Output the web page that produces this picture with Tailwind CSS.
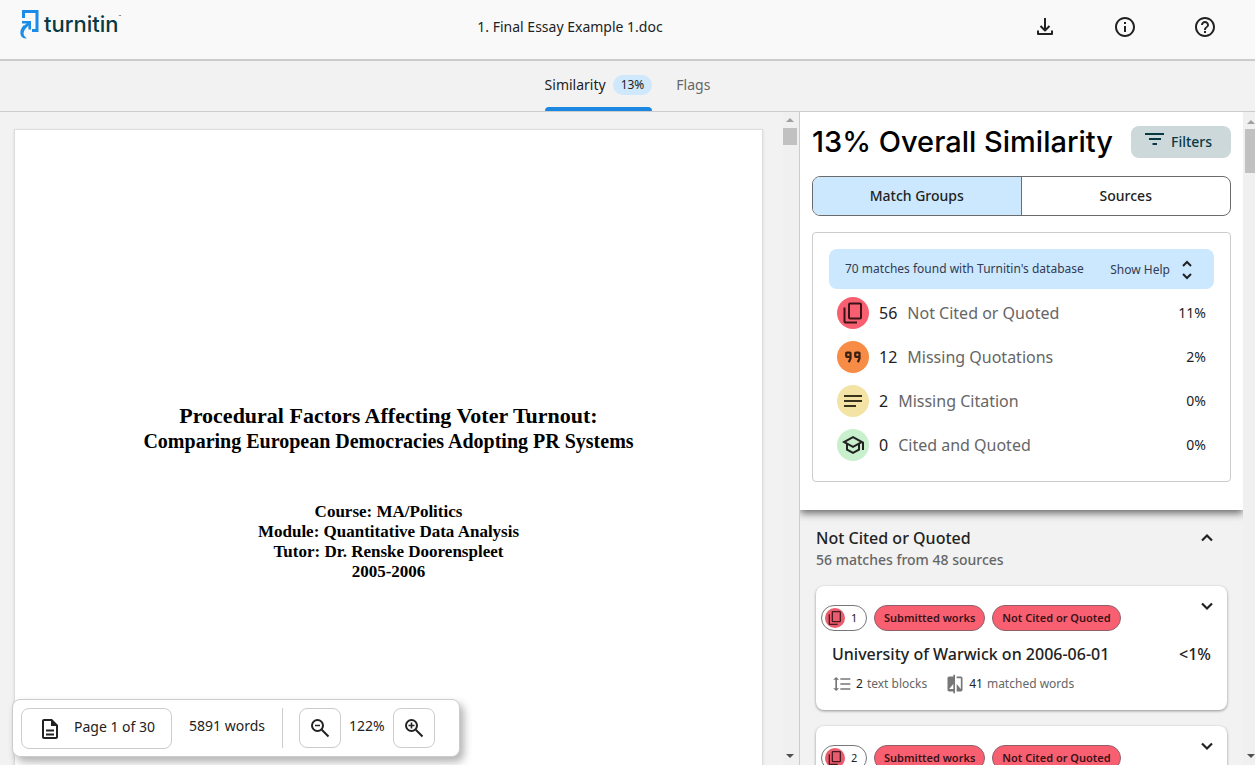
<!DOCTYPE html>
<html lang="en">
<head>
<meta charset="utf-8">
<title>1. Final Essay Example 1.doc</title>
<script src="https://cdn.jsdelivr.net/npm/@tailwindcss/browser@4"></script>
</head>
<body class="flex h-screen flex-col overflow-hidden bg-[#f2f2f2] font-['Noto_Sans',sans-serif] text-[#222]">
<svg class="hidden" aria-hidden="true">
  <symbol id="copy" viewBox="0 0 24 24"><path d="M9 2.500h10a1 1 0 0 1 1 1v13a1 1 0 0 1-1 1H9a1 1 0 0 1-1-1v-13a1 1 0 0 1 1-1zM3.500 6.500V20.500a1 1 0 0 0 1 1H16" fill="none" stroke="currentColor" stroke-width="2"/></symbol>
  <symbol id="down" viewBox="0 0 24 24"><path d="M7 9.500l5 5 5-5" fill="none" stroke="currentColor" stroke-width="2.200"/></symbol>
  <symbol id="spacing" viewBox="0 0 24 24"><path fill="currentColor" d="M6 7h2.500L5 3.500 1.500 7H4v10H1.500L5 20.500 8.500 17H6V7zm4-2v2h12V5H10zm0 14h12v-2H10v2zm0-6h12v-2H10v2z"/></symbol>
  <symbol id="compare" viewBox="0 0 24 24"><path fill="currentColor" d="M10 3H5c-1.100 0-2 .9-2 2v14c0 1.100.9 2 2 2h5v2h2V1h-2v2zm0 15H5l5-6v6zm9-15h-5v2h5v13l-5-6v9h5c1.100 0 2-.9 2-2V5c0-1.100-.9-2-2-2z"/></symbol>
  <symbol id="lens" viewBox="0 0 24 24"><path fill="none" stroke="currentColor" stroke-width="2" d="M14 14L20.500 20.500M9.500 4a5.500 5.500 0 1 0 0 11a5.500 5.500 0 1 0 0-11z"/></symbol>
</svg>

<header class="flex h-[61px] shrink-0 items-center border-b-2 border-[#ccc] bg-[#f9f9f9] pr-[10px]">
  <a href="#" class="flex w-[135px] items-start gap-1 pb-3 pl-5" aria-label="Turnitin">
    <svg class="h-8 w-5 shrink-0" viewBox="0 0 20 32" fill="none" stroke="#1b8ce8">
      <path stroke-width="3" d="M3.500 10V3.500H17V22.500H12"/>
      <path stroke-width="2.600" d="M2 14.300H9.700V21.500"/>
      <path stroke-width="3" d="M9 15L5 19"/>
      <path fill="#1b8ce8" stroke="none" d="M4 17L6.500 19.500C2.500 23.500 2.500 28 7 30.300C-1 31.500-1.500 22 4 17z"/>
    </svg>
    <span class="flex items-start font-[Inter,sans-serif] text-[22px] leading-8 font-medium text-[#083a44]">turnitin<span class="text-[4px] leading-[18px]">™</span></span>
  </a>
  <h1 class="flex-1 pb-[6px] text-center text-sm leading-5">1. Final Essay Example 1.doc</h1>
  <button class="flex w-20 justify-center pb-[6px]" aria-label="Download"><svg class="size-6" viewBox="0 0 24 24" fill="none" stroke="currentColor" stroke-width="2"><path d="M12 3v12M7.500 11l4.500 4.500 4.500-4.500M5 15.500V19h14v-3.500" stroke-linejoin="round"/></svg></button>
  <button class="flex w-20 justify-center pb-[6px]" aria-label="Information"><svg class="size-6" viewBox="0 0 24 24" fill="currentColor"><path d="M11 7h2v2h-2zm0 4h2v6h-2zm1-9C6.480 2 2 6.480 2 12s4.480 10 10 10 10-4.480 10-10S17.520 2 12 2zm0 18c-4.410 0-8-3.590-8-8s3.590-8 8-8 8 3.590 8 8-3.590 8-8 8z"/></svg></button>
  <button class="flex w-20 justify-center pb-[6px]" aria-label="Help"><svg class="size-6" viewBox="0 0 24 24" fill="currentColor"><path d="M11 18h2v-2h-2v2zm1-16C6.480 2 2 6.480 2 12s4.480 10 10 10 10-4.480 10-10S17.520 2 12 2zm0 18c-4.410 0-8-3.590-8-8s3.590-8 8-8 8 3.590 8 8-3.590 8-8 8zm0-14c-2.210 0-4 1.790-4 4h2c0-1.100.9-2 2-2s2 .9 2 2c0 2-3 1.750-3 5h2c0-2.250 3-2.500 3-5 0-2.210-1.790-4-4-4z"/></svg></button>
</header>

<nav class="flex h-[51px] shrink-0 justify-center gap-6 border-b border-[#ccc] text-sm">
  <button class="flex h-full flex-col justify-between pt-[14px]">
    <span class="flex items-center gap-[7px]">Similarity <span class="rounded-full bg-[#cfe8fc] px-2 text-xs leading-5">13%</span></span>
    <span class="h-1 w-full rounded-t-sm bg-[#1b87e0]"></span>
  </button>
  <button class="flex h-full items-start pt-[14px] text-[#666]">Flags</button>
</nav>

<main class="flex min-h-0 flex-1">
  <section class="relative flex min-w-0 flex-1 pl-[14px]">
    <article class="mt-[17px] min-w-0 flex-1 border border-b-0 border-[#ddd] bg-white pt-[273px] text-center font-['Liberation_Serif',serif] font-bold text-black shadow-sm">
      <h2 class="text-[22px] leading-[26px]">Procedural Factors Affecting Voter Turnout:</h2>
      <h3 class="text-xl leading-6">Comparing European Democracies Adopting PR Systems</h3>
      <div class="pt-[49px] text-[17px] leading-5">
        <p>Course: MA/Politics</p>
        <p>Module: Quantitative Data Analysis</p>
        <p>Tutor: Dr. Renske Doorenspleet</p>
        <p>2005-2006</p>
      </div>
    </article>
    <div class="ml-5 flex w-4 shrink-0 flex-col items-start justify-between bg-[#f0f0f0] pt-[6px] pb-[7px]">
      <div class="flex flex-col items-center gap-[6px]">
        <svg class="h-1 w-2" viewBox="0 0 8 4"><path fill="#a0a0a0" d="M0 4l4-4 4 4z"/></svg>
        <div class="h-[17px] w-[14px] bg-[#c1c1c1]"></div>
      </div>
      <svg class="ml-[3px] h-1 w-2" viewBox="0 0 8 4"><path fill="#505050" d="M0 0l4 4 4-4z"/></svg>
    </div>

    <div class="absolute bottom-2 left-3 flex items-start rounded-lg border border-[#ccc] bg-white pt-2 pr-6 pb-[7px] pl-2 text-sm shadow-[4px_5px_8px_rgba(0,0,0,0.3)]">
      <button class="flex h-[41px] items-center gap-3 rounded-lg border border-[#ccc] px-4 leading-5">
        <svg class="size-6" viewBox="0 0 24 24" fill="currentColor"><path d="M8 16.500h8v2H8zm0-4h8v2H8zM14 2H6c-1.100 0-2 .9-2 2v16c0 1.100.9 2 2 2h12c1.100 0 2-.9 2-2V8zM18 20H6V4h7v5h5z"/><path d="M13 3v6h6z"/></svg>
        <span class="pb-1">Page 1 of 30</span>
      </button>
      <span class="px-[17px] pt-2 leading-5">5891 words</span>
      <span class="mr-4 h-10 border-l border-[#ccc]"></span>
      <button class="flex h-10 w-[42px] items-center justify-center rounded-lg border border-[#ccc]" aria-label="Zoom out"><svg class="size-6" viewBox="0 0 24 24"><use href="#lens"/><path d="M7 9.500h5" stroke="currentColor" stroke-width="1.500"/></svg></button>
      <span class="px-2 pt-2 leading-5">122%</span>
      <button class="flex h-10 w-[42px] items-center justify-center rounded-lg border border-[#ccc]" aria-label="Zoom in"><svg class="size-6" viewBox="0 0 24 24"><use href="#lens"/><path d="M6.500 9.500h6M9.500 6.500v6" stroke="currentColor" stroke-width="1.600"/></svg></button>
    </div>
  </section>

  <aside class="flex w-[456px] shrink-0 border-l border-[#ccc]">
    <div class="min-w-0 flex-1 overflow-hidden">
      <div class="bg-white px-3 pt-[14px] pb-7 shadow-[0_3px_8px_rgba(0,0,0,0.6)]">
        <div class="flex items-center justify-between">
          <h2 class="font-[Inter,sans-serif] text-[29px] leading-8 font-medium whitespace-nowrap text-black">13% Overall Similarity</h2>
          <button class="flex h-8 w-[100px] items-center gap-[6px] rounded-lg bg-[#ccd8da] pl-[14px] text-sm font-medium text-[#083a44]">
            <svg class="mb-[6px] h-3 w-5" viewBox="0 0 20 12" fill="none" stroke="currentColor" stroke-width="2"><path d="M0 1h19M4 6h12M7.500 11h4.500"/></svg>
            Filters
          </button>
        </div>
        <div class="mt-[18px] grid h-10 grid-cols-2 overflow-hidden rounded-lg border border-[#6b6b6b] text-sm font-medium">
          <button class="border-r border-[#6b6b6b] bg-[#cbe8ff]">Match Groups</button>
          <button>Sources</button>
        </div>
        <div class="mt-4 rounded-sm border border-[#ccc] px-4 pt-4 pb-5">
          <div class="flex h-10 items-center justify-between rounded-lg bg-[#cbe8ff] pr-[15px] pl-4 text-xs text-[#343a50]">
            <span>70 matches found with Turnitin's database</span>
            <button class="flex items-center gap-[5px] pt-px">Show Help
              <svg class="size-6 text-[#222]" viewBox="0 0 24 24" fill="none" stroke="currentColor" stroke-width="2"><path d="M8 8l4-4 4 4M8 16l4 4 4-4"/></svg>
            </button>
          </div>
          <ul class="flex flex-col gap-3 px-2 pt-2 text-base">
            <li class="flex items-center gap-[10px]">
              <span class="flex size-8 items-center justify-center rounded-full bg-[#f86071]"><svg class="size-6 text-[#3a1218]"><use href="#copy"/></svg></span>
              <span>56</span><span class="flex-1 text-[#666]">Not Cited or Quoted</span><span class="text-sm">11%</span>
            </li>
            <li class="flex items-center gap-[10px]">
              <span class="flex size-8 items-center justify-center rounded-full bg-[#f68c45]"><svg class="h-3 w-[18px]" viewBox="0 0 18 12" fill="none" stroke="#3a2010" stroke-width="2.200"><path d="M6.500 5.800H3a.8.8 0 0 1-.8-.8V2.400a.8.800 0 0 1 .8-.8h2.700a.8.800 0 0 1 .8.8V7.500L4.800 11.200M15.500 5.800H12a.8.800 0 0 1-.8-.8V2.400a.8.800 0 0 1 .8-.8h2.700a.8.800 0 0 1 .8.8V7.500L13.800 11.200"/></svg></span>
              <span>12</span><span class="flex-1 text-[#666]">Missing Quotations</span><span class="text-sm">2%</span>
            </li>
            <li class="flex items-center gap-[10px]">
              <span class="flex size-8 items-center justify-center rounded-full bg-[#f3e3a4]"><svg class="h-3 w-[18px]" viewBox="0 0 18 12" stroke="#38331c" stroke-width="2"><path d="M0 1h18M0 6h18M0 11h12"/></svg></span>
              <span>2</span><span class="flex-1 text-[#666]">Missing Citation</span><span class="text-sm">0%</span>
            </li>
            <li class="flex items-center gap-[10px]">
              <span class="flex size-8 items-center justify-center rounded-full bg-[#c8f0cc]"><svg class="size-6" viewBox="0 0 24 24" fill="#222"><path d="M12 3 1 9l4 2.180v6L12 21l7-3.820v-6l2-1.090V17h2V9L12 3zm6.820 6L12 12.720 5.180 9 12 5.280 18.820 9zM17 15.990l-5 2.730-5-2.730v-3.720L12 15l5-2.730v3.720z"/></svg></span>
              <span>0</span><span class="flex-1 text-[#666]">Cited and Quoted</span><span class="text-sm">0%</span>
            </li>
          </ul>
        </div>
      </div>

      <div class="flex items-start justify-between px-4 pt-4 pb-4">
        <div>
          <h3 class="text-base leading-6 font-medium">Not Cited or Quoted</h3>
          <p class="text-sm leading-5 font-medium text-[#666]">56 matches from 48 sources</p>
        </div>
        <button class="mr-2" aria-label="Collapse group"><svg class="size-6 rotate-180"><use href="#down"/></svg></button>
      </div>

      <div class="flex flex-col gap-4 px-4">
        <article class="flex h-[124px] flex-col rounded-lg bg-white pt-2 pr-4 pl-[5px] shadow-[0_1px_3px_rgba(0,0,0,0.4)]">
          <div class="flex items-start gap-[7px] text-[11px]">
            <span class="mt-[11px] flex h-[26px] w-[46px] items-center gap-[6px] rounded-full border border-[#777] pl-[3px]"><span class="flex size-5 items-center justify-center rounded-full bg-[#e95c6d]"><svg class="size-4 text-[#4a1820]"><use href="#copy"/></svg></span>1</span>
            <span class="mt-[11px] flex h-[26px] items-center rounded-full border border-[#8d6068] bg-[#f86071] px-[9px] font-semibold text-[#3a1218]">Submitted works</span>
            <span class="mt-[11px] flex h-[26px] items-center rounded-full border border-[#8d6068] bg-[#f86071] px-[9px] font-semibold text-[#3a1218]">Not Cited or Quoted</span>
            <button class="-mr-2 ml-auto" aria-label="Expand match 1"><svg class="size-6"><use href="#down"/></svg></button>
          </div>
          <div class="mt-[11px] flex items-center justify-between pl-[11px] leading-6 font-medium"><h4>University of Warwick on 2006-06-01</h4><span>&lt;1%</span></div>
          <div class="mt-2 flex items-center pl-[11px] text-xs leading-5 text-[#666]">
            <svg class="mr-1 size-5 text-[#777]"><use href="#spacing"/></svg><span class="flex gap-1"><span class="text-[#222]">2</span> text blocks</span>
            <svg class="mr-1 ml-[18px] size-5 text-[#777]"><use href="#compare"/></svg><span class="flex gap-1"><span class="text-[#222]">41</span> matched words</span>
          </div>
        </article>
        <article class="flex h-[124px] flex-col rounded-lg bg-white pt-2 pr-4 pl-[5px] shadow-[0_1px_3px_rgba(0,0,0,0.4)]">
          <div class="flex items-start gap-[7px] text-[11px]">
            <span class="mt-[11px] flex h-[26px] w-[46px] items-center gap-[6px] rounded-full border border-[#777] pl-[3px]"><span class="flex size-5 items-center justify-center rounded-full bg-[#e95c6d]"><svg class="size-4 text-[#4a1820]"><use href="#copy"/></svg></span>2</span>
            <span class="mt-[11px] flex h-[26px] items-center rounded-full border border-[#8d6068] bg-[#f86071] px-[9px] font-semibold text-[#3a1218]">Submitted works</span>
            <span class="mt-[11px] flex h-[26px] items-center rounded-full border border-[#8d6068] bg-[#f86071] px-[9px] font-semibold text-[#3a1218]">Not Cited or Quoted</span>
            <button class="-mr-2 ml-auto" aria-label="Expand match 2"><svg class="size-6"><use href="#down"/></svg></button>
          </div>
        </article>
      </div>
    </div>
    <div class="flex w-3 shrink-0 flex-col items-end justify-between overflow-hidden bg-[#f0f0f0] pt-[8px] pb-[7px]">
      <div class="flex flex-col items-end gap-[5px]">
        <svg class="h-1 w-2" viewBox="0 0 8 4"><path fill="#a0a0a0" d="M0 4l4-4 4 4z"/></svg>
        <div class="h-11 w-[10px] bg-[#c1c1c1]"></div>
      </div>
      <svg class="h-1 w-2" viewBox="0 0 8 4"><path fill="#505050" d="M0 0l4 4 4-4z"/></svg>
    </div>
  </aside>
</main>
</body>
</html>
